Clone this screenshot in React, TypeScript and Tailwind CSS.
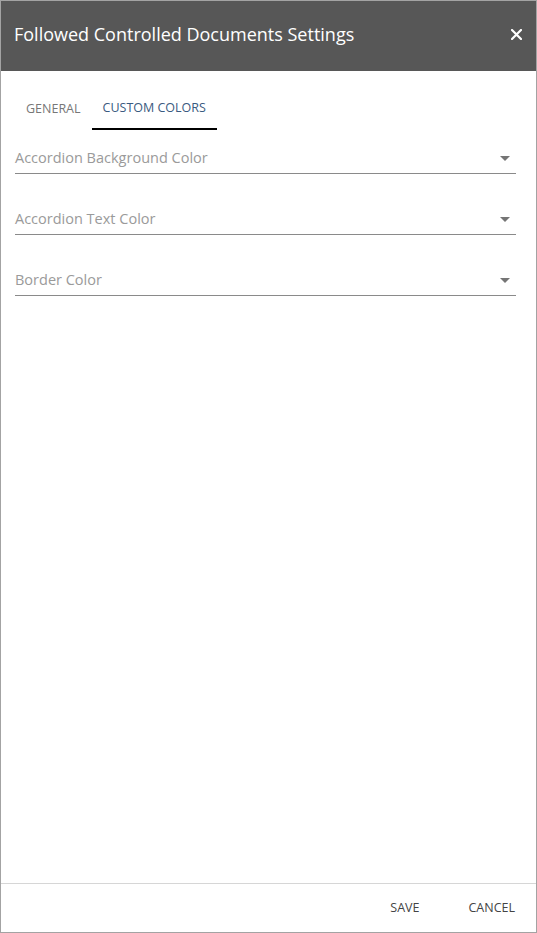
import React from "react"

const fields = ["Accordion Background Color", "Accordion Text Color", "Border Color"]

const Caret = () => (
  <svg width="10" height="5" viewBox="0 0 10 5" className="mr-[6px]">
    <path d="M0 0 L10 0 L5 5 Z" fill="#757575" />
  </svg>
)

const App = () => {
  return (
    <div
      className="flex h-[933px] w-[537px] flex-col border border-[#a3a3a3] bg-white"
      style={{ fontFamily: "'Open Sans', 'Liberation Sans', sans-serif" }}
    >
      {/* header */}
      <div className="flex h-[70px] shrink-0 items-center justify-between bg-[#575757] pb-[3px] pl-[13px] pr-[14px]">
        <h1 className="text-[18px] font-normal text-white">Followed Controlled Documents Settings</h1>
        <svg width="11" height="11" viewBox="0 0 11 11">
          <path d="M1 1 L10 10 M10 1 L1 10" stroke="white" strokeWidth="2.2" strokeLinecap="round" />
        </svg>
      </div>

      {/* tabs */}
      <div className="mt-[15px] flex px-[14px]">
        <div className="flex h-[44px] items-center px-[11px] pt-[2px] text-[12.5px] text-[#777]">GENERAL</div>
        <div className="flex h-[44px] items-center border-b-2 border-black px-[11px] pt-[2px] text-[12.5px] text-[#3a5a80]">
          CUSTOM COLORS
        </div>
      </div>

      {/* fields */}
      <div className="flex flex-col pl-[14px] pr-[20px]">
        {fields.map((f, i) => (
          <div
            key={f}
            className={`flex h-[31px] items-center justify-between border-b border-[#8a8a8a] ${i === 0 ? "mt-[13px]" : "mt-[30px]"}`}
          >
            <span className="text-[14.5px] text-[#9a9a9a]">{f}</span>
            <Caret />
          </div>
        ))}
      </div>

      <div className="flex-1" />

      {/* footer */}
      <div className="flex h-[49px] shrink-0 items-center justify-end border-t border-[#d6d6d6] pr-[21px]">
        <button className="mr-[48px] pr-[1px] text-[12.5px] text-[#444]">SAVE</button>
        <button className="text-[12.5px] text-[#444]">CANCEL</button>
      </div>
    </div>
  )
}

export default App
